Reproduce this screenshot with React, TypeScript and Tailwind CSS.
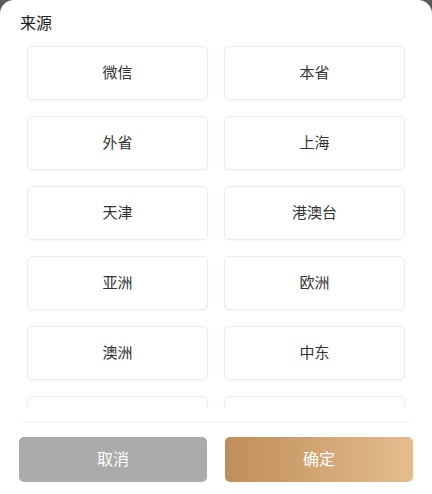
import React from "react";

const items = ["微信", "本省", "外省", "上海", "天津", "港澳台", "亚洲", "欧洲", "澳洲", "中东", "", ""];

export default function App() {
  return (
    <div
      className="w-[432px] h-[494px] bg-[#5a5a5a] overflow-hidden"
      style={{ fontFamily: '"Noto Sans CJK SC", "Noto Sans", sans-serif' }}
    >
      <div className="w-full h-full bg-white rounded-t-[14px] flex flex-col">
        <div className="h-[38px] pl-[20px] pt-[10px] text-[16px] leading-[24px] text-[#222]">来源</div>
        <div className="h-[369px] overflow-hidden pt-[8px] px-[27px]">
          <div className="grid grid-cols-2 gap-x-[16px] gap-y-[16px]">
            {items.map((t, i) => (
              <div
                key={i}
                className="h-[54px] pb-[2px] rounded-[5px] border border-[#ebebeb] shadow-[0_1px_2px_rgba(0,0,0,0.04)] flex items-center justify-center text-[15px] text-[#333]"
              >
                {t}
              </div>
            ))}
          </div>
        </div>
        <div className="mx-[19px] mt-[14px] h-px bg-[#f3f3f3]" />
        <div className="flex gap-[18px] px-[19px] mt-[15px]">
          <button className="flex-1 h-[45px] pb-[3px] rounded-[5px] bg-[#ababab] text-white text-[16px]">取消</button>
          <button className="flex-1 h-[45px] pb-[3px] rounded-[5px] bg-gradient-to-r from-[#c08e58] to-[#e4bd8e] text-white text-[16px]">确定</button>
        </div>
      </div>
    </div>
  );
}
